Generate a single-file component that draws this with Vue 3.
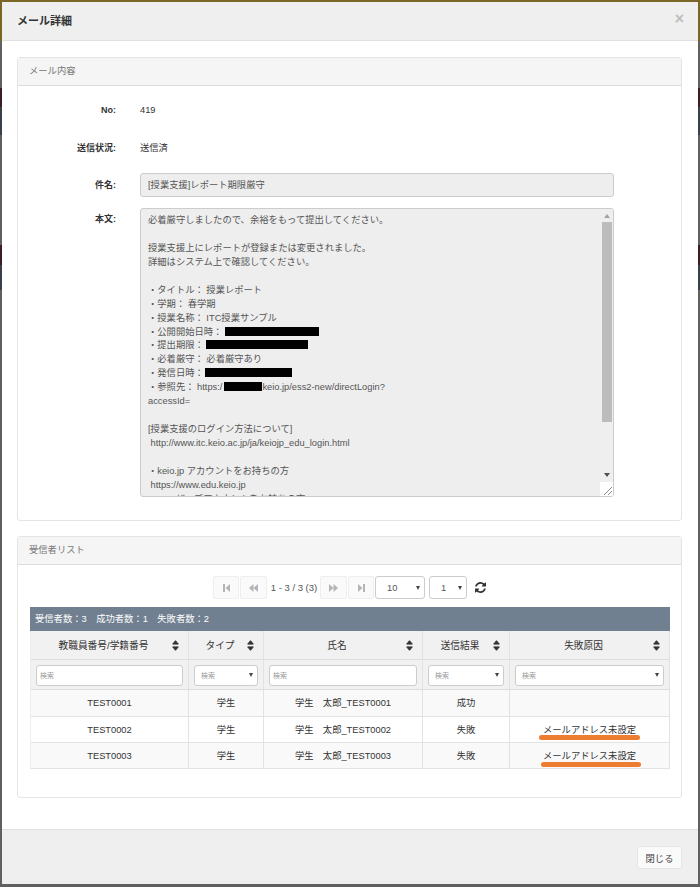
<script setup>
const bodyLines = [
  '必着厳守しましたので、余裕をもって提出してください。', '',
  '授業支援上にレポートが登録または変更されました。',
  '詳細はシステム上で確認してください。', '',
  '・タイトル： 授業レポート', '・学期： 春学期', '・授業名称： ITC授業サンプル'
]
const rows = [
  { id: 'TEST0001', type: '学生', name: '学生　太郎_TEST0001', result: '成功', reason: '', cls: 'odd h1' },
  { id: 'TEST0002', type: '学生', name: '学生　太郎_TEST0002', result: '失敗', reason: 'メールアドレス未設定', cls: 'h2' },
  { id: 'TEST0003', type: '学生', name: '学生　太郎_TEST0003', result: '失敗', reason: 'メールアドレス未設定', cls: 'odd h3' }
]
const heads = ['教職員番号/学籍番号', 'タイプ', '氏名', '送信結果', '失敗原因']
</script>

<template>
  <div class="page">
    <div class="modal">
      <header class="mhead">
        <h4>メール詳細</h4>
        <span class="close">×</span>
      </header>
      <main class="mbody">
        <section class="panel first">
          <div class="phead">メール内容</div>
          <div class="pbody form">
            <div class="row r1"><label>No:</label><span>419</span></div>
            <div class="row r2"><label>送信状況:</label><span>送信済</span></div>
            <div class="row r3"><label>件名:</label><div class="input">[授業支援]レポート期限厳守</div></div>
            <div class="row r4">
              <label>本文:</label>
              <div class="area">
                <div class="text">
                  <div v-for="(l, i) in bodyLines" :key="i" class="ln">{{ l }}</div>
                  <div class="ln">・公開開始日時： <i class="mask m1"></i></div>
                  <div class="ln">・提出期限： <i class="mask m2"></i></div>
                  <div class="ln">・必着厳守： 必着厳守あり</div>
                  <div class="ln">・発信日時： <i class="mask m3"></i></div>
                  <div class="ln">・参照先： https:/<i class="mask m4"></i>keio.jp/ess2-new/directLogin?</div>
                  <div class="ln">accessId=</div>
                  <div class="ln"></div>
                  <div class="ln">[授業支援のログイン方法について]</div>
                  <div class="ln">&nbsp;http://www.itc.keio.ac.jp/ja/keiojp_edu_login.html</div>
                  <div class="ln"></div>
                  <div class="ln">・keio.jp アカウントをお持ちの方</div>
                  <div class="ln">&nbsp;https://www.edu.keio.jp</div>
                  <div class="ln">・ユーザーズアカウントをお持ちの方</div>
                </div>
                <div class="sbar">
                  <svg class="up" width="6" height="4" viewBox="0 0 6 4"><path d="M3 0L6 4H0z" fill="#a3a3a3"/></svg>
                  <div class="thumb"></div>
                  <svg class="down" width="6" height="4" viewBox="0 0 6 4"><path d="M3 4L6 0H0z" fill="#505050"/></svg>
                </div>
                <div class="grip">
                  <svg width="13" height="14" viewBox="0 0 13 14"><path d="M4 13L12 5M8 13L12 9" stroke="#888" fill="none"/></svg>
                </div>
              </div>
            </div>
          </div>
        </section>

        <section class="panel second">
          <div class="phead">受信者リスト</div>
          <div class="pbody list">
            <div class="pager">
              <button class="pg"><svg width="7" height="8" viewBox="0 0 7 8"><path d="M0 0h2v8H0zM7 0v8L2.500 4z" fill="#b5b5b5"/></svg></button>
              <button class="pg wide"><svg width="9" height="8" viewBox="0 0 9 8"><path d="M4.500 0v8L0 4zM9 0v8L4.500 4z" fill="#b5b5b5"/></svg></button>
              <span class="count">1 - 3 / 3 (3)</span>
              <button class="pg wide"><svg width="9" height="8" viewBox="0 0 9 8"><path d="M0 0v8l4.500-4zM4.500 0v8L9 4z" fill="#b5b5b5"/></svg></button>
              <button class="pg"><svg width="7" height="8" viewBox="0 0 7 8"><path d="M0 0v8l4.500-4zM5 0h2v8H5z" fill="#b5b5b5"/></svg></button>
              <div class="sel s10"><span>10</span><b class="tri"></b></div>
              <div class="sel s1"><span>1</span><b class="tri"></b></div>
              <svg class="refresh" width="11" height="11" viewBox="0 0 1536 1536"><path fill="#333" d="M1511 928q0 5-1 7-64 268-268 434.500T764 1536q-146 0-282.500-55T238 1324l-129 129q-19 19-45 19t-45-19-19-45V960q0-26 19-45t45-19h448q26 0 45 19t19 45-19 45l-137 137q71 66 161 102t187 36q134 0 250-65t186-179q11-17 53-117 8-23 30-23h192q13 0 22.500 9.500t9.500 22.500zM1536 128v448q0 26-19 45t-45 19h-448q-26 0-45-19t-19-45 19-45l138-138Q969 256 768 256q-134 0-250 65T332 500q-11 17-53 117-8 23-30 23H50q-13 0-22.500-9.500T18 608v-7q65-268 270-434.500T768 0q146 0 284 55.500T1297 212l130-129q19-19 45-19t45 19 19 45z"/></svg>
            </div>
            <div class="caption"><span>受信者数：3</span><span>成功者数：1</span><span>失敗者数：2</span></div>
            <div class="grid">
              <div v-for="h in heads" :key="h" class="th">
                <span class="ht">{{ h }}</span>
                <svg class="sort" width="7" height="11" viewBox="0 0 7 11"><path d="M3.500 .7L6.300 4.100H.7zM3.500 10.300L.7 6.900h5.600z" fill="#333" stroke="#333" stroke-linejoin="round"/></svg>
              </div>
              <div class="fl"><div class="fin">検索</div></div>
              <div class="fl"><div class="fin fs">検索<b class="tri"></b></div></div>
              <div class="fl"><div class="fin">検索</div></div>
              <div class="fl"><div class="fin fs">検索<b class="tri"></b></div></div>
              <div class="fl"><div class="fin fs">検索<b class="tri"></b></div></div>
              <template v-for="r in rows" :key="r.id">
                <div class="td" :class="r.cls">{{ r.id }}</div>
                <div class="td" :class="r.cls">{{ r.type }}</div>
                <div class="td" :class="r.cls">{{ r.name }}</div>
                <div class="td" :class="r.cls">{{ r.result }}</div>
                <div class="td reason" :class="r.cls">{{ r.reason }}<i v-if="r.reason" class="mark"></i></div>
              </template>
            </div>
          </div>
        </section>
      </main>
      <footer class="mfoot"><button class="btn">閉じる</button></footer>
    </div>
  </div>
</template>

<style>
html, body { margin: 0; padding: 0; background: #5f5f5f; }
</style>

<style scoped>
.page {
  width: 700px; height: 887px; overflow: hidden; box-sizing: border-box;
  padding: 2px 2px 3px 2px;
  background: linear-gradient(#7a6726 0 41px, #606060 41px 88px, #3d1c22 88px 107px, #3a4148 107px 135px, #606060 135px 245px, #3d1c22 245px 265px, #3a4148 265px 290px, #606060 290px);
  font-family: "Liberation Sans", "Noto Sans CJK JP", sans-serif;
  font-size: 9.3px; color: #333;
}
.modal { height: 882px; background: #fff; display: flex; flex-direction: column; box-sizing: border-box; }
.mhead {
  height: 39px; box-sizing: border-box; background: #efefef; border-bottom: 1px solid #e0e0e0;
  display: flex; justify-content: space-between; align-items: center; padding: 0 15px 2px 15px; flex: none;
}
.mhead h4 { margin: 0; font-size: 11px; font-weight: 700; color: #333; }
.close { font-size: 16px; font-weight: 700; color: #bdbdbd; margin-right: -1px; margin-top: -2px; }
.mbody { flex: 1; padding: 16px 16px 0 15px; min-height: 0; }
.panel { border: 1px solid #e4e4e4; border-radius: 3px; background: #fff; box-sizing: border-box; }
.first { height: 464px; }
.second { height: 262px; margin-top: 15px; }
.phead { height: 27px; line-height: 27px; background: #f5f5f5; border-bottom: 1px solid #ddd; padding-left: 11px; color: #777; }
.row { display: grid; grid-template-columns: 98px 1fr; column-gap: 24px; }
.row label { text-align: right; font-weight: 700; color: #333; font-size: 9px; }
.r1 { margin-top: 17px; height: 15px; line-height: 15px; }
.r2 { margin-top: 23px; height: 15px; line-height: 15px; }
.r3 { margin-top: 17px; line-height: 24px; }
.r4 { margin-top: 11px; }
.input {
  width: 474px; height: 24px; line-height: 23px; background: #eee; border: 1px solid #ccc; border-radius: 3px;
  padding-left: 7px; box-sizing: border-box; color: #555;
}
.area {
  position: relative; width: 474px; height: 289px; background: #eee; border: 1px solid #ccc; border-radius: 3px;
  box-sizing: border-box; overflow: hidden; color: #555; display: flex;
}
.r4 label { line-height: 22px; }
.text { flex: 1; padding: 4px 0 0 7px; min-width: 0; }
.ln { height: 13.95px; line-height: 14px; white-space: nowrap; }
.mask { display: inline-block; background: #000; height: 9px; vertical-align: -1px; }
.m1 { width: 94px; }
.m2 { width: 102px; }
.m3 { width: 87px; margin-left: -1px; }
.m4 { width: 38px; margin-left: 2px; }
.sbar { width: 12px; flex: none; display: flex; flex-direction: column; align-items: center; background: #efefef; position: relative; }
.up { margin-top: 5px; }
.thumb { width: 10px; height: 200px; background: #bcbcbc; margin-top: 4px; }
.down { position: absolute; bottom: 19px; left: 3px; }
.grip { position: absolute; right: 0; bottom: 0; width: 13px; height: 14px; background: #fff; }
.list { padding: 0 11px 0 12px; }
.pager { height: 42px; display: flex; align-items: center; padding-left: 183px; box-sizing: border-box; padding-top: 3px; }
.pg {
  width: 26px; height: 23px; background: #fafafa; border: 1px solid #eee; border-radius: 2px; padding: 0;
  display: flex; align-items: center; justify-content: center; margin-right: 1px;
}
.pg.wide { width: 27px; }
.count { width: 50px; text-align: center; white-space: nowrap; color: #555; font-size: 9.5px; padding: 0 1px; }
.sel {
  position: relative; height: 23px; border: 1px solid #ccc; border-radius: 3px; background: #fff; box-sizing: border-box;
  display: flex; align-items: center; color: #555;
}
.s10 { width: 50px; padding-left: 11px; }
.s1 { width: 38px; margin-left: 4px; padding-left: 11px; }
.tri { position: absolute; right: 4px; top: 9px; width: 0; height: 0; border-left: 2.500px solid transparent; border-right: 2.500px solid transparent; border-top: 4px solid #444; }
.refresh { margin-left: 8px; }
.caption { height: 24px; line-height: 24px; background: #708090; color: #fff; padding-left: 5px; display: flex; gap: 9.500px; }
.grid { display: grid; grid-template-columns: 158px 75px 159px 87px 160px; border-left: 1px solid #eee; width: 640px; box-sizing: border-box; }
.th {
  height: 29px; background: #f1f1f1; border-right: 1px solid #e2e2e2; border-bottom: 1px solid #ddd; box-sizing: border-box;
  display: flex; align-items: center; justify-content: center; position: relative; color: #333; padding-right: 12px; font-size: 9.7px;
}
.sort { position: absolute; right: 9px; top: 9px; }
.fl { height: 30px; background: #f1f1f1; border-right: 1px solid #e2e2e2; border-bottom: 1px solid #ddd; padding: 5px 5px 0 5px; box-sizing: border-box; }
.fin {
  position: relative; height: 21px; line-height: 20px; background: #fff; border: 1px solid #ccc; border-radius: 3px; box-sizing: border-box;
  font-size: 7px; color: #999; padding-left: 3px;
}
.fs { padding-left: 6px; }
.fin .tri { top: 7px; right: 4px; }
.td { line-height: 26px; text-align: center; border-right: 1px solid #e2e2e2; border-bottom: 1px solid #e2e2e2; box-sizing: border-box; background: #fff; color: #333; position: relative; }
.td.odd { background: #f9f9f9; }
.td.h1 { height: 27px; line-height: 27px; }
.td.h2 { height: 26px; }
.td.h3 { height: 26px; line-height: 27px; }
.mark { position: absolute; left: 29px; width: 101px; height: 5px; top: 18px; border-radius: 3px; background: #ed7d31; }
.h3 .mark { left: 31px; width: 100px; top: 19px; }
.mfoot { height: 55px; flex: none; background: #efefef; border-top: 1px solid #e0e0e0; box-sizing: border-box; display: flex; justify-content: flex-end; padding: 16px 16px 0 0; }
.btn { width: 45px; height: 23px; background: #fafafa; border: 1px solid #e6e6e6; border-radius: 3px; font: 9.3px "Liberation Sans", "Noto Sans CJK JP", sans-serif; color: #444; padding: 0; }
</style>
